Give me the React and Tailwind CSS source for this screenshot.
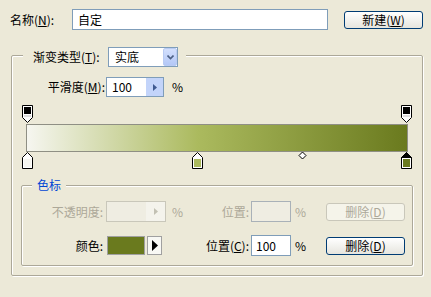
const bg = "bg-[#ECE9D8]";

function TopStop() {
  return (
    <svg width="11" height="18" viewBox="0 0 11 18">
      <path d="M0.5 0.5H10.5V12.5L5.5 17.5L0.5 12.5Z" fill="#fff" stroke="#000" />
      <rect x="2" y="2" width="7" height="7" fill="#000" />
      <path d="M2 11H9" stroke="#bdbdbd" />
    </svg>
  );
}

function BottomStop({ color, selected }) {
  return (
    <svg width="11" height="17" viewBox="0 0 11 17">
      <path d="M5.5 0.5L10.5 5.5V16.5H0.5V5.5Z" fill="#fff" stroke="#000" />
      {selected && <path d="M5.5 0.5L10.5 5.5H0.5Z" fill="#000" stroke="#000" />}
      <rect x="2" y="7" width="7" height="8" fill={color} />
    </svg>
  );
}

function XpButton({ children, disabled }) {
  return (
    <div
      className={
        "w-[79px] h-[18px] rounded-[3px] border flex items-center justify-center leading-none " +
        (disabled
          ? "border-[#C9C7BA] bg-[#F5F4EA] text-[#ACA899]"
          : "border-[#003C74] bg-gradient-to-b from-white to-[#E6E5DE] text-black")
      }
    >
      {children}
    </div>
  );
}

function ArrowRight({ color }) {
  return (
    <svg width="4" height="7" viewBox="0 0 4 7">
      <path d="M0 0L4 3.5L0 7Z" fill={color} />
    </svg>
  );
}

export default function App() {
  return (
    <div className={`w-[431px] h-[297px] ${bg} overflow-hidden text-[12px] text-black font-['Noto_Sans_CJK_SC','Noto_Sans',sans-serif]`}>
      {/* name row */}
      <div className="flex items-start pt-[9px] pl-[10px]">
        <div className="w-[62px] h-[21px] flex items-center">
          名称(<u>N</u>):
        </div>
        <div className="w-[256px] h-[21px] border border-[#7F9DB9] bg-white flex items-center pl-[5px]">自定</div>
        <div className="ml-[16px] mt-[2px]">
          <XpButton>
            新建(<u>W</u>)
          </XpButton>
        </div>
      </div>

      <fieldset className="mt-[17px] ml-[11px] w-[412px] h-[229px] border border-[#ACA899] rounded-[2px] shadow-[inset_1px_1px_0_#fff,1px_1px_0_#fff]">
        <legend className={`ml-[11px] pl-[10px] pr-[8px] h-[16px] ${bg}`}>
          <div className="flex items-start">
            <div className="w-[75px] h-[20px] flex items-center">
              渐变类型(<u>T</u>):
            </div>
            <div className="w-[70px] h-[20px] border border-[#7F9DB9] bg-white flex items-center">
              <span className="flex-1 pl-[6px]">实底</span>
              <div className="w-[14px] h-[18px] rounded-[2px] bg-gradient-to-b from-[#D3E0FD] to-[#B4C8F6] border border-[#B9CBF3] flex items-center justify-center">
                <svg width="7" height="5" viewBox="0 0 7 5">
                  <path d="M0.5 0.5L3.5 3.5L6.5 0.5" fill="none" stroke="#4D6185" strokeWidth="1.6" />
                </svg>
              </div>
            </div>
          </div>
        </legend>

        {/* smoothness */}
        <div className="mt-[14px] flex items-center h-[20px]">
          <div className="w-[94px] pr-[1px] text-right">
            平滑度(<u>M</u>):
          </div>
          <div className="w-[58px] h-[20px] border border-[#7F9DB9] bg-white flex">
            <span className="flex-1 pl-[5px] flex items-center">100</span>
            <div className="w-[17px] bg-[#C3D4FA] flex items-center justify-center">
              <ArrowRight color="#3F5A91" />
            </div>
          </div>
          <span className="ml-[8px]">%</span>
        </div>

        {/* gradient editor */}
        <div className="relative mt-[8px] ml-[10px] w-[391px] h-[63px]">
          <div className="absolute left-0 top-0">
            <TopStop />
          </div>
          <div className="absolute left-[379px] top-0">
            <TopStop />
          </div>
          <div className="ml-[4px] pt-[19px]">
            <div className="w-[382px] h-[28px] border border-[#8F8F84] bg-[linear-gradient(to_right,#F6F6F0_0%,#ABBA5E_45%,#6A7A1E_100%)]" />
          </div>
          <div className="absolute left-0 top-[47px]">
            <BottomStop color="#F6F6F0" />
          </div>
          <div className="absolute left-[170px] top-[47px]">
            <BottomStop color="#ABBA5E" />
          </div>
          <div className="absolute left-[379px] top-[47px]">
            <BottomStop color="#6A7A1E" selected />
          </div>
          <div className="absolute left-[276px] top-[46px]">
            <svg width="9" height="9" viewBox="0 0 9 9">
              <path d="M4.5 1L8 4.5L4.5 8L1 4.5Z" fill="#fff" stroke="#000" />
            </svg>
          </div>
        </div>

        {/* color stops group */}
        <fieldset className="mt-[9px] ml-[9px] w-[392px] h-[89px] border border-[#ACA899] rounded-[2px] shadow-[inset_1px_1px_0_#fff,1px_1px_0_#fff]">
          <legend className={`ml-[10px] px-[5px] h-[16px] leading-[16px] text-[#0046D5] ${bg}`}>色标</legend>

          <div className="mt-[8px] flex items-center h-[21px] text-[#ACA899]">
            <div className="w-[84px] pr-[3px] text-right">不透明度:</div>
            <div className="w-[60px] h-[21px] border border-[#C9C7BA] bg-[#EFEDE2] flex">
              <span className="flex-1" />
              <div className="w-[19px] bg-[#F4F3EC] flex items-center justify-center">
                <ArrowRight color="#C2C0B3" />
              </div>
            </div>
            <div className="w-[20px] pl-[6px]">%</div>
            <div className="w-[65px] pr-[2px] text-right">位置:</div>
            <div className="w-[40px] h-[21px] border border-[#A9B1B8] bg-[#EFEDE2]" />
            <div className="w-[35px] pl-[4px]">%</div>
            <XpButton disabled>
              删除(<u>D</u>)
            </XpButton>
          </div>

          <div className="mt-[13px] flex items-center h-[21px]">
            <div className="w-[84px] pr-[3px] text-right">颜色:</div>
            <div className="ml-[1px] w-[38px] h-[19px] border border-[#A0A0A0] bg-[#6A7A1E]" />
            <div className="ml-[2px] w-[15px] h-[19px] border border-[#A0A0A0] bg-[#F8F8F4] flex items-center justify-center">
              <svg width="6" height="11" viewBox="0 0 6 11">
                <path d="M0 0L6 5.5L0 11Z" fill="#000" />
              </svg>
            </div>
            <div className="w-[24px]" />
            <div className="w-[65px] pr-[2px] text-right">
              位置(<u>C</u>):
            </div>
            <div className="w-[40px] h-[21px] border border-[#7F9DB9] bg-white flex items-center pl-[4px]">100</div>
            <div className="w-[35px] pl-[4px]">%</div>
            <XpButton>
              删除(<u>D</u>)
            </XpButton>
          </div>
        </fieldset>
      </fieldset>
    </div>
  );
}
